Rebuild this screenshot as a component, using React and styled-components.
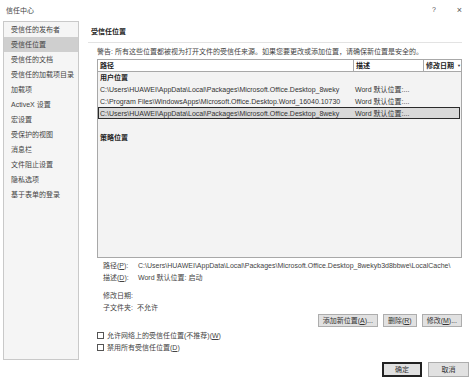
import styled, { createGlobalStyle } from "styled-components";

const Global = createGlobalStyle`
  html, body { margin: 0; padding: 0; background: #fff; overflow: hidden; }
  body {
    font-family: "Liberation Sans", "Noto Sans CJK SC", sans-serif;
    font-size: 7px;
    color: #333;
    text-autospace: no-autospace;
  }
`;

const Window = styled.div`
  width: 474px;
  height: 380px;
  display: flex;
  flex-direction: column;
  background: #fff;
`;

const TitleBar = styled.div`
  height: 21px;
  display: flex;
  align-items: center;
  padding: 0 12px 0 6px;
  color: #444;
  box-sizing: border-box;
`;

const TitleText = styled.div`
  flex: 1;
  margin-top: -2px;
`;

const TitleButton = styled.span`
  width: 26px;
  text-align: right;
  color: #555;
  font-size: ${(p) => (p.$big ? "9px" : "7px")};
  margin-top: -2px;
`;

const Body = styled.div`
  display: flex;
  height: 339px;
  padding: 0 12px 0 3px;
`;

const Sidebar = styled.ul`
  list-style: none;
  margin: 0;
  padding: 0;
  width: 76px;
  border: 1px solid #c9c9c9;
  background: #f5f5f5;
  box-sizing: border-box;
`;

const NavItem = styled.li`
  height: 15px;
  line-height: 15px;
  padding-left: 7px;
  color: #444;
  background: ${(p) => (p.$active ? "#cfcfcf" : "transparent")};
  white-space: nowrap;
`;

const Main = styled.div`
  flex: 1;
  margin-left: 9px;
  display: flex;
  flex-direction: column;
  padding-top: 5px;
`;

const Heading = styled.div`
  font-weight: bold;
  line-height: 12px;
  padding-left: 3px;
  color: #222;
`;

const Separator = styled.div`
  height: 1px;
  background: #e3e3e3;
  margin-top: 4px;
`;

const Content = styled.div`
  padding-left: 9px;
  display: flex;
  flex-direction: column;
`;

const Warning = styled.div`
  line-height: 12px;
  margin-top: 3px;
  white-space: nowrap;
  color: #444;
`;

const Table = styled.div`
  margin-top: 1px;
  height: 199px;
  border: 1px solid #a8a8a8;
  background: #f3f3f3;
  box-sizing: border-box;
  display: flex;
  flex-direction: column;
`;

const HeaderRow = styled.div`
  display: grid;
  grid-template-columns: 255px 70px 1fr;
  height: 11px;
  background: #fff;
  border-bottom: 1px solid #a8a8a8;
`;

const HeaderCell = styled.div`
  font-weight: bold;
  line-height: 11px;
  padding: 0 2px;
  color: #222;
  border-left: ${(p) => (p.$first ? "none" : "1px solid #a8a8a8")};
  display: flex;
  align-items: center;
  gap: 3px;
  white-space: nowrap;
  overflow: hidden;
`;

const Caret = styled.span`
  font-size: 4px;
  font-weight: normal;
  color: #333;
`;

const GroupLabel = styled.div`
  font-weight: bold;
  line-height: 11px;
  padding-left: 2px;
  color: #222;
  margin-top: ${(p) => p.$gap || 0}px;
`;

const Row = styled.div`
  display: grid;
  grid-template-columns: 255px 1fr;
  height: 12px;
  line-height: 12px;
  box-sizing: border-box;
  background: ${(p) => (p.$selected ? "#d9d9d9" : "transparent")};
  border: 1px solid ${(p) => (p.$selected ? "#2a2a2a" : "transparent")};
  margin: 0 1px 0 0;
  color: #333;
`;

const Cell = styled.div`
  white-space: nowrap;
  overflow: hidden;
  padding-left: 1px;
`;

const Details = styled.div`
  margin-top: 2px;
  padding-left: 6px;
  display: flex;
  flex-direction: column;
`;

const DetailRow = styled.div`
  display: flex;
  line-height: 12px;
  height: 12px;
  margin-top: ${(p) => p.$gap || 0}px;
  white-space: nowrap;
  color: #444;
`;

const DetailLabel = styled.span`
  width: ${(p) => p.$w || 35}px;
  flex: none;
`;

const ActionRow = styled.div`
  display: flex;
  justify-content: flex-end;
  gap: 5px;
`;

const Button = styled.button`
  font: inherit;
  color: #333;
  height: ${(p) => (p.$tall ? 15 : 13)}px;
  min-width: ${(p) => p.$w || 0}px;
  padding: 0 4px;
  background: #e1e1e1;
  border: ${(p) => (p.$primary ? "2px solid #222" : "1px solid #adadad")};
  box-sizing: border-box;
  line-height: 1;
`;

const CheckRow = styled.label`
  display: flex;
  align-items: center;
  height: 12px;
  gap: 3px;
  margin-top: ${(p) => p.$gap || 0}px;
  color: #444;
  white-space: nowrap;
`;

const Box = styled.span`
  width: 7px;
  height: 7px;
  border: 1px solid #555;
  background: #fff;
  box-sizing: border-box;
  flex: none;
`;

const Footer = styled.div`
  display: flex;
  justify-content: flex-end;
  gap: 6px;
  padding: 2px 5px 0 0;
`;

const navItems = [
  "受信任的发布者",
  "受信任位置",
  "受信任的文档",
  "受信任的加载项目录",
  "加载项",
  "ActiveX 设置",
  "宏设置",
  "受保护的视图",
  "消息栏",
  "文件阻止设置",
  "隐私选项",
  "基于表单的登录",
];

const userRows = [
  "C:\\Users\\HUAWEI\\AppData\\Local\\Packages\\Microsoft.Office.Desktop_8weky",
  "C:\\Program Files\\WindowsApps\\Microsoft.Office.Desktop.Word_16040.10730",
  "C:\\Users\\HUAWEI\\AppData\\Local\\Packages\\Microsoft.Office.Desktop_8weky",
];

export default function App() {
  return (
    <Window>
      <Global />
      <TitleBar>
        <TitleText>信任中心</TitleText>
        <TitleButton>?</TitleButton>
        <TitleButton $big>×</TitleButton>
      </TitleBar>
      <Body>
        <Sidebar>
          {navItems.map((n) => (
            <NavItem key={n} $active={n === "受信任位置"}>
              {n}
            </NavItem>
          ))}
        </Sidebar>
        <Main>
          <Heading>受信任位置</Heading>
          <Separator />
          <Content>
            <Warning>警告: 所有这些位置都被视为打开文件的受信任来源。如果您要更改或添加位置，请确保新位置是安全的。</Warning>
            <Table>
              <HeaderRow>
                <HeaderCell $first>路径</HeaderCell>
                <HeaderCell>描述</HeaderCell>
                <HeaderCell>
                  修改日期<Caret>▼</Caret>
                </HeaderCell>
              </HeaderRow>
              <GroupLabel>用户位置</GroupLabel>
              {userRows.map((r, i) => (
                <Row key={i} $selected={i === 2}>
                  <Cell>{r}</Cell>
                  <Cell>Word 默认位置:...</Cell>
                </Row>
              ))}
              <GroupLabel $gap={13}>策略位置</GroupLabel>
            </Table>
            <Details>
              <DetailRow>
                <DetailLabel>
                  路径(<u>P</u>):
                </DetailLabel>
                C:\Users\HUAWEI\AppData\Local\Packages\Microsoft.Office.Desktop_8wekyb3d8bbwe\LocalCache\
              </DetailRow>
              <DetailRow>
                <DetailLabel>
                  描述(<u>D</u>):
                </DetailLabel>
                Word 默认位置: 启动
              </DetailRow>
              <DetailRow $gap={6}>
                <DetailLabel>修改日期:</DetailLabel>
              </DetailRow>
              <DetailRow>
                <DetailLabel $w={34}>子文件夹:</DetailLabel>
                不允许
              </DetailRow>
            </Details>
            <ActionRow>
              <Button $w={58}>
                添加新位置(<u>A</u>)...
              </Button>
              <Button $w={32}>
                删除(<u>R</u>)
              </Button>
              <Button $w={39}>
                修改(<u>M</u>)...
              </Button>
            </ActionRow>
            <CheckRow $gap={2}>
              <Box />
              <span>
                允许网络上的受信任位置(不推荐)(<u>W</u>)
              </span>
            </CheckRow>
            <CheckRow>
              <Box />
              <span>
                禁用所有受信任位置(<u>D</u>)
              </span>
            </CheckRow>
          </Content>
        </Main>
      </Body>
      <Footer>
        <Button $tall $primary $w={40}>
          确定
        </Button>
        <Button $tall $w={41}>
          取消
        </Button>
      </Footer>
    </Window>
  );
}
